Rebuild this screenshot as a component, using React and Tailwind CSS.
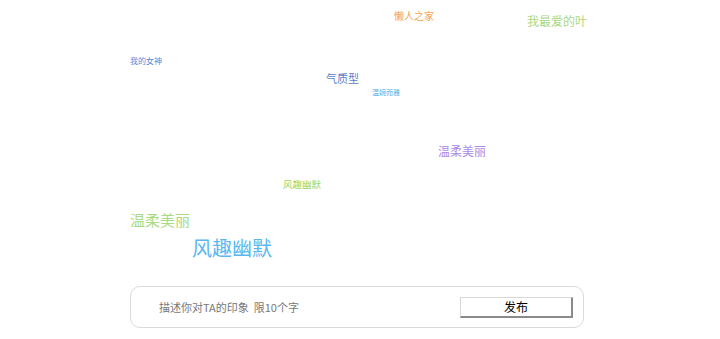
const words = [
  { text: "懒人之家", cls: "left-[394px] top-[11px] text-[10px] text-[#f3a057]" },
  { text: "我最爱的叶", cls: "left-[527px] top-[15px] text-[12px] text-[#a9d884]" },
  { text: "我的女神", cls: "left-[130px] top-[57px] text-[8px] text-[#5a8ad6]" },
  { text: "气质型", cls: "left-[326px] top-[73px] text-[11px] text-[#5b7fc9]" },
  { text: "温婉而雅", cls: "left-[372px] top-[89px] text-[7px] text-[#4eaef0]" },
  { text: "温柔美丽", cls: "left-[438px] top-[145px] text-[12px] text-[#a88ce8]" },
  { text: "风趣幽默", cls: "left-[283px] top-[180px] text-[9.5px] text-[#9cd65e]" },
  { text: "温柔美丽", cls: "left-[130px] top-[212px] text-[15px] text-[#a8dc84]" },
  { text: "风趣幽默", cls: "left-[192px] top-[238px] text-[20px] text-[#5ab7f0]" },
];

export default function App() {
  return (
    <div className="w-[720px] h-[339px] bg-white font-['Noto_Sans_CJK_SC',sans-serif] overflow-hidden">
      {/* word cloud */}
      <div className="relative h-[286px]">
        {words.map((w, i) => (
          <span key={i} className={"absolute leading-none whitespace-nowrap " + w.cls}>
            {w.text}
          </span>
        ))}
      </div>
      <div className="ml-[130px] w-[454px] h-[42px] rounded-[10px] border border-[#dadada] flex items-center pl-[28px] pr-[10px]">
        <span className="flex-1 text-[11px] text-[#777] leading-none whitespace-pre">描述你对TA的印象  限10个字</span>
        <button className="w-[113px] h-[21px] bg-white border border-t-[#d8d8d8] border-l-[#d8d8d8] border-b-2 border-r-2 border-b-[#8a8a8a] border-r-[#8a8a8a] text-[12px] text-black leading-none flex items-center justify-center">
          发布
        </button>
      </div>
    </div>
  );
}
